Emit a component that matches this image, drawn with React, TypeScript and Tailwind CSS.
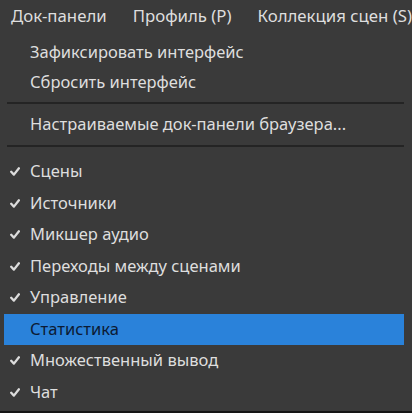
import React from "react";

const Check = () => (
  <svg width="10" height="9" viewBox="0 0 10 9" className="block">
    <path d="M1.2 4.8 L3.9 7.6 L8.9 1.3" fill="none" stroke="#dcdcdc" strokeWidth="2.3" strokeLinecap="round" strokeLinejoin="round" />
  </svg>
);

const items: { label: string; checked: boolean; active?: boolean }[] = [
  { label: "Сцены", checked: true },
  { label: "Источники", checked: true },
  { label: "Микшер аудио", checked: true },
  { label: "Переходы между сценами", checked: true },
  { label: "Управление", checked: true },
  { label: "Статистика", checked: false, active: true },
  { label: "Множественный вывод", checked: true },
  { label: "Чат", checked: true },
];

export default function App() {
  return (
    <div
      className="w-[412px] h-[413px] bg-[#3a3a3a] overflow-hidden flex flex-col text-[#dedede]"
      style={{ fontFamily: '"Noto Sans", "Open Sans", sans-serif' }}
    >
      <div className="h-[31px] flex items-center text-[16.8px] shrink-0">
        <span className="pl-[11px] pr-[13px] whitespace-nowrap">Док-панели</span>
        <span className="px-[13px] whitespace-nowrap">Профиль (P)</span>
        <span className="px-[13px] whitespace-nowrap">Коллекция сцен (S)</span>
      </div>
      <div className="flex flex-col text-[16.5px] pt-[6px] pr-[8px] pl-[4px] border-b-2 border-[#151515] flex-1">
        <div className="h-[30px] flex items-center pl-[26px] whitespace-nowrap">Зафиксировать интерфейс</div>
        <div className="h-[30px] flex items-center pl-[26px] whitespace-nowrap">Сбросить интерфейс</div>
        <div className="h-[11px] flex items-center pl-[3px]">
          <div className="h-[2px] w-full bg-[#242424]" />
        </div>
        <div className="h-[32px] flex items-center pl-[26px] whitespace-nowrap">Настраиваемые док-панели браузера...</div>
        <div className="h-[11px] flex items-center pl-[3px]">
          <div className="h-[2px] w-full bg-[#242424]" />
        </div>
        <div className="h-[5px]" />
        {items.map((it) => (
          <div
            key={it.label}
            className={
              "h-[31.5px] flex items-center whitespace-nowrap " +
              (it.active ? "bg-[#2a82da] text-[#0c1a33]" : "")
            }
          >
            <div className="w-[26px] flex justify-center pl-[2px] pr-[6px]">{it.checked ? <Check /> : null}</div>
            <span>{it.label}</span>
          </div>
        ))}
      </div>
    </div>
  );
}
